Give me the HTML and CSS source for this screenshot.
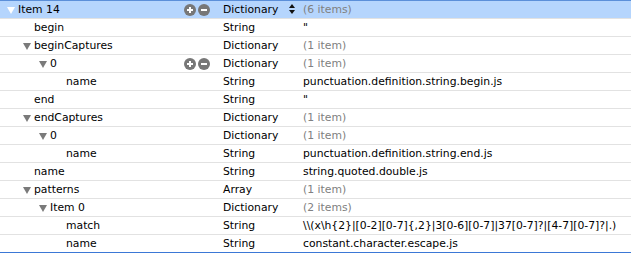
FILE: index.html
```html
<!DOCTYPE html>
<html>
<head>
<meta charset="utf-8">
<link rel="stylesheet" href="styles.css">
</head>
<body>
<div class="plist">
  <div class="row selected">
    <div class="key lvl0"><span class="disc open"></span><span class="label">Item 14</span>
      <span class="btns"><span class="btn plus"></span><span class="btn minus"></span></span></div>
    <div class="type">Dictionary<span class="sorter"><span class="up"></span><span class="down"></span></span></div>
    <div class="value count">(6 items)</div>
  </div>
  <div class="row">
    <div class="key lvl1"><span class="disc"></span><span class="label">begin</span></div>
    <div class="type">String</div>
    <div class="value">"</div>
  </div>
  <div class="row">
    <div class="key lvl1"><span class="disc open"></span><span class="label">beginCaptures</span></div>
    <div class="type">Dictionary</div>
    <div class="value count">(1 item)</div>
  </div>
  <div class="row">
    <div class="key lvl2"><span class="disc open"></span><span class="label">0</span>
      <span class="btns"><span class="btn plus"></span><span class="btn minus"></span></span></div>
    <div class="type">Dictionary</div>
    <div class="value count">(1 item)</div>
  </div>
  <div class="row">
    <div class="key lvl3"><span class="disc"></span><span class="label">name</span></div>
    <div class="type">String</div>
    <div class="value">punctuation.definition.string.begin.js</div>
  </div>
  <div class="row">
    <div class="key lvl1"><span class="disc"></span><span class="label">end</span></div>
    <div class="type">String</div>
    <div class="value">"</div>
  </div>
  <div class="row">
    <div class="key lvl1"><span class="disc open"></span><span class="label">endCaptures</span></div>
    <div class="type">Dictionary</div>
    <div class="value count">(1 item)</div>
  </div>
  <div class="row">
    <div class="key lvl2"><span class="disc open"></span><span class="label">0</span></div>
    <div class="type">Dictionary</div>
    <div class="value count">(1 item)</div>
  </div>
  <div class="row">
    <div class="key lvl3"><span class="disc"></span><span class="label">name</span></div>
    <div class="type">String</div>
    <div class="value">punctuation.definition.string.end.js</div>
  </div>
  <div class="row">
    <div class="key lvl1"><span class="disc"></span><span class="label">name</span></div>
    <div class="type">String</div>
    <div class="value">string.quoted.double.js</div>
  </div>
  <div class="row">
    <div class="key lvl1"><span class="disc open"></span><span class="label">patterns</span></div>
    <div class="type">Array</div>
    <div class="value count">(1 item)</div>
  </div>
  <div class="row">
    <div class="key lvl2"><span class="disc open"></span><span class="label">Item 0</span></div>
    <div class="type">Dictionary</div>
    <div class="value count">(2 items)</div>
  </div>
  <div class="row">
    <div class="key lvl3"><span class="disc"></span><span class="label">match</span></div>
    <div class="type">String</div>
    <div class="value">\\(x\h{2}|[0-2][0-7]{,2}|3[0-6][0-7]|37[0-7]?|[4-7][0-7]?|.)</div>
  </div>
  <div class="row last">
    <div class="key lvl3"><span class="disc"></span><span class="label">name</span></div>
    <div class="type">String</div>
    <div class="value">constant.character.escape.js</div>
  </div>
</div>
</body>
</html>
```
FILE: styles.css
```css
* { box-sizing: border-box; }
html, body { margin: 0; padding: 0; background: #fff; }
body {
  font-family: "DejaVu Sans", sans-serif;
  font-size: 10.8px;
  color: #000;
  width: 631px;
  height: 253px;
  overflow: hidden;
}
.plist {
  display: flex;
  flex-direction: column;
  border-top: 1px solid #5b8fd9;
}
.row {
  display: grid;
  grid-template-columns: 220px 80px 1fr;
  height: 18px;
  border-bottom: 1px solid #e2e2e2;
  align-items: center;
  line-height: 17px;
  white-space: nowrap;
}
.row.selected { background: #b5d5fd; }
.row.last { border-bottom-color: #3b78d6; }
.key {
  display: flex;
  align-items: center;
  height: 17px;
  position: relative;
}
.lvl0 { padding-left: 2px; }
.lvl1 { padding-left: 18px; }
.lvl2 { padding-left: 34px; }
.lvl3 { padding-left: 50px; }
.disc {
  width: 16px;
  height: 17px;
  flex: none;
  position: relative;
}
.disc.open::before {
  content: "";
  position: absolute;
  left: 5px;
  top: 6px;
  border-left: 4.5px solid transparent;
  border-right: 4.5px solid transparent;
  border-top: 7px solid #7a7a7a;
}
.selected .disc.open::before { border-top-color: #fff; }
.btns {
  position: absolute;
  left: 184px;
  top: 3px;
  display: flex;
  gap: 2px;
}
.btn {
  width: 12px;
  height: 12px;
  border-radius: 50%;
  background: #777;
  position: relative;
}
.btn::before, .plus::after {
  content: "";
  position: absolute;
  background: #fff;
  left: 3px;
  top: 5px;
  width: 6px;
  height: 2px;
}
.plus::after { left: 5px; top: 3px; width: 2px; height: 6px; }
.type {
  padding-left: 3px;
  position: relative;
  height: 17px;
}
.sorter {
  position: absolute;
  left: 69px;
  top: 3px;
  display: flex;
  flex-direction: column;
  gap: 2px;
}
.sorter .up {
  border-left: 3px solid transparent;
  border-right: 3px solid transparent;
  border-bottom: 4px solid #111;
}
.sorter .down {
  border-left: 3px solid transparent;
  border-right: 3px solid transparent;
  border-top: 4px solid #111;
}
.value { padding-left: 3px; height: 17px; }
.count { color: #808080; }
```
